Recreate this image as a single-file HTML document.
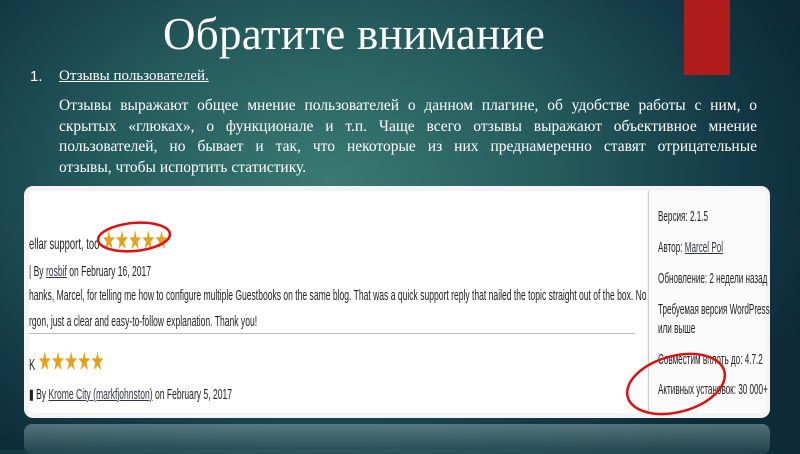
<!DOCTYPE html>
<html><head><meta charset="utf-8"><style>
*{margin:0;padding:0;box-sizing:border-box}
body{width:800px;height:450px;overflow:hidden;position:relative;
background:radial-gradient(ellipse 520px 360px at 330px 180px,#3a7a72 0%,#245a5c 45%,#133845 80%,#0d2a36 100%);
font-family:"Liberation Serif",serif;color:#fff}
.red{position:absolute;left:684px;top:0;width:46px;height:75px;background:#b01c1c}
h1{position:absolute;left:163px;top:8px;font-weight:normal;font-size:45px;letter-spacing:0.3px;white-space:nowrap}
.num{position:absolute;left:30px;top:68px;font-size:15px;font-family:"Liberation Sans",sans-serif}
.hd{position:absolute;left:59px;top:68px;font-size:15px;text-decoration:underline}
.p{position:absolute;left:59px;top:96px;width:698px;font-size:15.5px;line-height:20.5px}
.p div{text-align:justify;text-align-last:justify;white-space:nowrap;height:20.5px}
.p div.l{text-align-last:left}
.shot{position:absolute;left:24px;top:186px;width:746px;height:232px;background:#f4f4f4;border-radius:9px;overflow:hidden}
.main{position:absolute;left:5px;top:5px;width:618px;height:222px;background:#fff;border-radius:6px 0 0 6px}
.side{position:absolute;left:624px;top:5px;width:118px;height:222px;background:#fbfbfb;border-left:1px solid #ccc}
.t{position:absolute;font-family:"Liberation Sans",sans-serif;font-size:14.5px;color:#222;white-space:nowrap;transform:scaleX(0.59);transform-origin:0 0}
.side .t{transform:scaleX(0.56)}
.st{color:#e6a117;font-size:26px;letter-spacing:-1px}
u{color:#334}
.refl{position:absolute;left:24px;top:424px;width:746px;height:30px;background:linear-gradient(#7f9fa3,#2c5058);border-radius:8px;opacity:.6}
</style></head><body>
<div class="red"></div>
<h1>Обратите внимание</h1>
<div class="num">1.</div>
<div class="hd">Отзывы пользователей.</div>
<div class="p">
<div>Отзывы выражают общее мнение пользователей о данном плагине, об удобстве работы с ним, о</div>
<div>скрытых «глюках», о функционале и т.п. Чаще всего отзывы выражают объективное мнение</div>
<div>пользователей, но бывает и так, что некоторые из них преднамеренно ставят отрицательные</div>
<div class="l">отзывы, чтобы испортить статистику.</div>
</div>
<div class="shot">
 <div class="main">
  <div class="t" style="left:0;top:34px;font-size:16px">ellar support, too <span class="st">★★★★★</span></div>
  <div class="t" style="left:0;top:73px">| By <u>rosbif</u> on February 16, 2017</div>
  <div class="t" style="left:0;top:97px">hanks, Marcel, for telling me how to configure multiple Guestbooks on the same blog. That was a quick support reply that nailed the topic straight out of the box. No</div>
  <div class="t" style="left:0;top:123px">rgon, just a clear and easy-to-follow explanation. Thank you!</div>
  <div style="position:absolute;left:0;top:142px;width:606px;height:1px;background:#bbb"></div>
  <div class="t" style="left:0;top:155px;font-size:16px">K <span class="st">★★★★★</span></div>
  <div class="t" style="left:0;top:196px">▮ By <u>Krome City (markfjohnston)</u> on February 5, 2017</div>
 </div>
 <div class="side">
  <div class="t" style="left:9px;top:18px">Версия: 2.1.5</div>
  <div class="t" style="left:9px;top:49px">Автор: <u>Marcel Pol</u></div>
  <div class="t" style="left:9px;top:80px">Обновление: 2 недели назад</div>
  <div class="t" style="left:9px;top:111px">Требуемая версия WordPress</div>
  <div class="t" style="left:9px;top:130px">или выше</div>
  <div class="t" style="left:9px;top:161px">Совместим вплоть до: 4.7.2</div>
  <div class="t" style="left:9px;top:191px">Активных установок: 30 000+</div>
 </div>
</div>
<div class="refl"></div>
<svg style="position:absolute;left:0;top:0" width="800" height="450">
 <ellipse cx="134" cy="237" rx="36" ry="14" fill="none" stroke="#e01010" stroke-width="2.5" transform="rotate(-5 134 237)"/>
 <ellipse cx="676" cy="384" rx="50" ry="28" fill="none" stroke="#e01010" stroke-width="2.5" transform="rotate(-15 676 384)"/>
</svg>
</body></html>
